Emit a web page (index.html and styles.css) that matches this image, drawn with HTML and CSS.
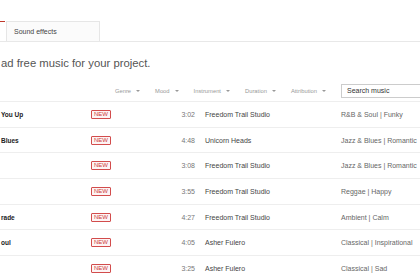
FILE: index.html
```html
<!DOCTYPE html>
<html lang="en">
<head>
    <meta charset="UTF-8">
    <meta name="viewport" content="width=device-width, initial-scale=1.0">
    <title>Free Music Library</title>
    <link rel="stylesheet" href="styles.css">
</head>
<body>
    <div class="library">
        <div class="tabs">
            <div class="tab tab-active"></div>
            <div class="tab">Sound effects</div>
        </div>

        <p class="lead">ad free music for your project.</p>

        <div class="toolbar">
            <span class="filter">Genre</span>
            <span class="filter">Mood</span>
            <span class="filter">Instrument</span>
            <span class="filter">Duration</span>
            <span class="filter">Attribution</span>
            <div class="search">Search music</div>
        </div>

        <div class="tracks">
            <div class="track">
                <span class="track-title">You Up</span>
                <span><span class="badge">NEW</span></span>
                <span class="track-time">3:02</span>
                <span class="track-artist">Freedom Trail Studio</span>
                <span class="track-genre">R&amp;B &amp; Soul | Funky</span>
            </div>
            <div class="track">
                <span class="track-title">Blues</span>
                <span><span class="badge">NEW</span></span>
                <span class="track-time">4:48</span>
                <span class="track-artist">Unicorn Heads</span>
                <span class="track-genre">Jazz &amp; Blues | Romantic</span>
            </div>
            <div class="track">
                <span class="track-title"></span>
                <span><span class="badge">NEW</span></span>
                <span class="track-time">3:08</span>
                <span class="track-artist">Freedom Trail Studio</span>
                <span class="track-genre">Jazz &amp; Blues | Romantic</span>
            </div>
            <div class="track">
                <span class="track-title"></span>
                <span><span class="badge">NEW</span></span>
                <span class="track-time">3:55</span>
                <span class="track-artist">Freedom Trail Studio</span>
                <span class="track-genre">Reggae | Happy</span>
            </div>
            <div class="track">
                <span class="track-title">rade</span>
                <span><span class="badge">NEW</span></span>
                <span class="track-time">4:27</span>
                <span class="track-artist">Freedom Trail Studio</span>
                <span class="track-genre">Ambient | Calm</span>
            </div>
            <div class="track">
                <span class="track-title">oul</span>
                <span><span class="badge">NEW</span></span>
                <span class="track-time">4:05</span>
                <span class="track-artist">Asher Fulero</span>
                <span class="track-genre">Classical | Inspirational</span>
            </div>
            <div class="track">
                <span class="track-title"></span>
                <span><span class="badge">NEW</span></span>
                <span class="track-time">3:25</span>
                <span class="track-artist">Asher Fulero</span>
                <span class="track-genre">Classical | Sad</span>
            </div>
        </div>
    </div>
</body>
</html>
```

FILE: styles.css
```css
html, body {
    overflow: hidden;
}

body {
    margin: 0;
    background: #fff;
    font-family: 'Liberation Sans', Arial, sans-serif;
    color: #555;
}

.library {
    width: 450px;
}

.tabs {
    display: flex;
    margin-top: 21px;
    border-bottom: 1px solid #e8e8e8;
}

.tab {
    box-sizing: border-box;
    height: 20px;
    line-height: 19px;
    font-size: 7px;
    color: #444;
}

.tab-active {
    width: 5px;
    border-top: 1.5px solid #c0392b;
}

.tab:not(.tab-active) {
    width: 94px;
    margin-left: 1px;
    padding-left: 7px;
    background: #fbfbfb;
    border: 1px solid #e6e6e6;
    border-bottom: none;
}

.lead {
    margin: 14px 0 0 1px;
    font-size: 11.3px;
    line-height: 14px;
    color: #555;
}

.toolbar {
    display: flex;
    align-items: center;
    justify-content: flex-end;
    gap: 15px;
    margin-top: 14px;
    padding-bottom: 3px;
    border-bottom: 1px solid #eee;
}

.filter {
    display: flex;
    align-items: center;
    font-size: 5.8px;
    color: #999;
}

.filter::after {
    content: '';
    margin-left: 5px;
    border-left: 2px solid transparent;
    border-right: 2px solid transparent;
    border-top: 2.5px solid #999;
}

.search {
    box-sizing: border-box;
    width: 109px;
    height: 14px;
    padding-left: 5px;
    line-height: 12px;
    font-size: 7px;
    color: #333;
    border: 1px solid #ccc;
}

.track {
    box-sizing: border-box;
    display: grid;
    grid-template-columns: 91px 70px 34px 146px 1fr;
    align-items: center;
    height: 25.7px;
    border-bottom: 1px solid #eee;
    font-size: 7px;
    white-space: nowrap;
}

.track-title {
    padding-left: 1px;
    font-size: 6.5px;
    font-weight: bold;
    color: #222;
}

.badge {
    display: inline-block;
    padding: 0 2px;
    font-size: 6px;
    line-height: 7px;
    color: #cc3b3b;
    background: #fdf4f4;
    border: 1px solid #d24c4c;
    border-radius: 1px;
}

.track-time {
    text-align: right;
    color: #777;
}

.track-artist {
    padding-left: 10px;
    color: #444;
}

.track-genre {
    color: #666;
}
```
